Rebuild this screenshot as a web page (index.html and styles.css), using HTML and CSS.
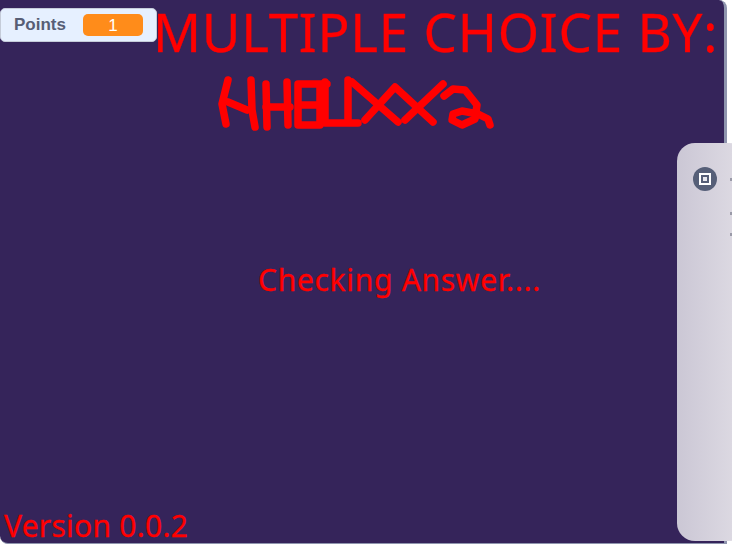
FILE: index.html
```html
<!DOCTYPE html>
<html lang="en">
<head>
<meta charset="utf-8">
<title>Multiple Choice</title>
<link rel="stylesheet" href="styles.css">
</head>
<body>
<main class="stage">
  <div class="monitor">
    <span class="monitor-label">Points</span>
    <span class="monitor-value">1</span>
  </div>
  <div class="title">MULTIPLE CHOICE BY:</div>
  <svg class="scribble" width="500" height="140" viewBox="0 0 500 140" fill="none" stroke="#ff0000" stroke-width="7.5" stroke-linecap="round" stroke-linejoin="round">
    <path d="M228 80 L222 104 L226 124"/>
    <path d="M228 102 L247 110"/>
    <path d="M251 80 L252 110 L255 127"/>
    <path d="M266 84 L267 127"/>
    <path d="M287 82 L288 125"/>
    <path d="M266 107 L290 107"/>
    <path d="M298 84 L327 84 M298 84 L298 125 L320 125 L320 84 M298 105 L320 105"/>
    <path d="M325 82 L325 123 L358 123 M348 80 L348 123"/>
    <path d="M352 82 L398 122"/>
    <path d="M365 120 L395 87 L433 122"/>
    <path d="M405 120 L443 84"/>
    <path d="M444 96 L453 89 L465 90 L477 105 L475 119 L462 125 L452 120 L453 114 L462 111 L478 114 L488 119 L490 125"/>
  </svg>
  <div class="checking">Checking Answer....</div>
  <div class="version">Version 0.0.2</div>
</main>
<aside class="panel">
  <span class="panel-icon"><span class="panel-glyph"><span class="panel-dot"></span></span></span>
  <span class="speck speck-a"></span>
  <span class="speck speck-b"></span>
  <span class="speck speck-c"></span>
</aside>
</body>
</html>
```
FILE: styles.css
```css
html, body {
  margin: 0;
  padding: 0;
  width: 732px;
  height: 544px;
  overflow: hidden;
  background: #ffffff;
}

.stage {
  position: relative;
  box-sizing: border-box;
  width: 727px;
  height: 544px;
  background: #35245a;
  border-right: 3px solid #8f95ae;
  border-bottom: 1px solid #8f95ae;
  border-radius: 0 8px 0 8px;
  font-family: "Noto Sans", sans-serif;
  color: #ff0000;
  -webkit-text-stroke: 0.3px #ff0000;
}

.monitor {
  position: absolute;
  left: 0;
  top: 8px;
  box-sizing: border-box;
  width: 157px;
  height: 34px;
  display: flex;
  align-items: center;
  padding-left: 13px;
  background: #e6f0ff;
  border: 1px solid #c5ccd9;
  border-radius: 5px;
  font-family: "Liberation Sans", Arial, sans-serif;
  font-size: 17px;
  -webkit-text-stroke: 0;
}

.monitor-label {
  width: 69px;
  font-weight: 700;
  color: #575e75;
}

.monitor-value {
  width: 60px;
  height: 22px;
  line-height: 24px;
  text-align: center;
  color: #ffffff;
  background: #ff8c1a;
  border-radius: 5px;
}

.title {
  position: absolute;
  left: 153px;
  top: 0;
  font-size: 53px;
  line-height: 64px;
  letter-spacing: 0.72px;
  white-space: nowrap;
}

.scribble {
  position: absolute;
  left: 0;
  top: 0;
}

.checking {
  position: absolute;
  left: 258px;
  top: 259px;
  font-size: 30px;
  line-height: 41px;
  letter-spacing: 0.7px;
  white-space: nowrap;
}

.version {
  position: absolute;
  left: 4px;
  top: 508px;
  font-size: 30px;
  line-height: 35px;
  letter-spacing: 0.25px;
  white-space: nowrap;
}

.panel {
  position: absolute;
  left: 677px;
  top: 143px;
  box-sizing: border-box;
  width: 70px;
  height: 398px;
  padding: 24px 0 0 16px;
  background: linear-gradient(90deg, #cbc7d5, #e0dde5);
  border-radius: 18px;
}

.panel-icon {
  display: flex;
  align-items: center;
  justify-content: center;
  width: 24px;
  height: 24px;
  border-radius: 50%;
  background: #565f78;
}

.panel-glyph {
  box-sizing: border-box;
  display: flex;
  align-items: center;
  justify-content: center;
  width: 12px;
  height: 12px;
  border: 2px solid #ffffff;
}

.panel-dot {
  width: 4px;
  height: 4px;
  background: #e8e8ee;
}

.speck {
  position: absolute;
  left: 53px;
  width: 2px;
  height: 3px;
  background: #9a9aa8;
}

.speck-a { top: 35px; }
.speck-b { top: 69px; }
.speck-c { top: 90px; }
```
